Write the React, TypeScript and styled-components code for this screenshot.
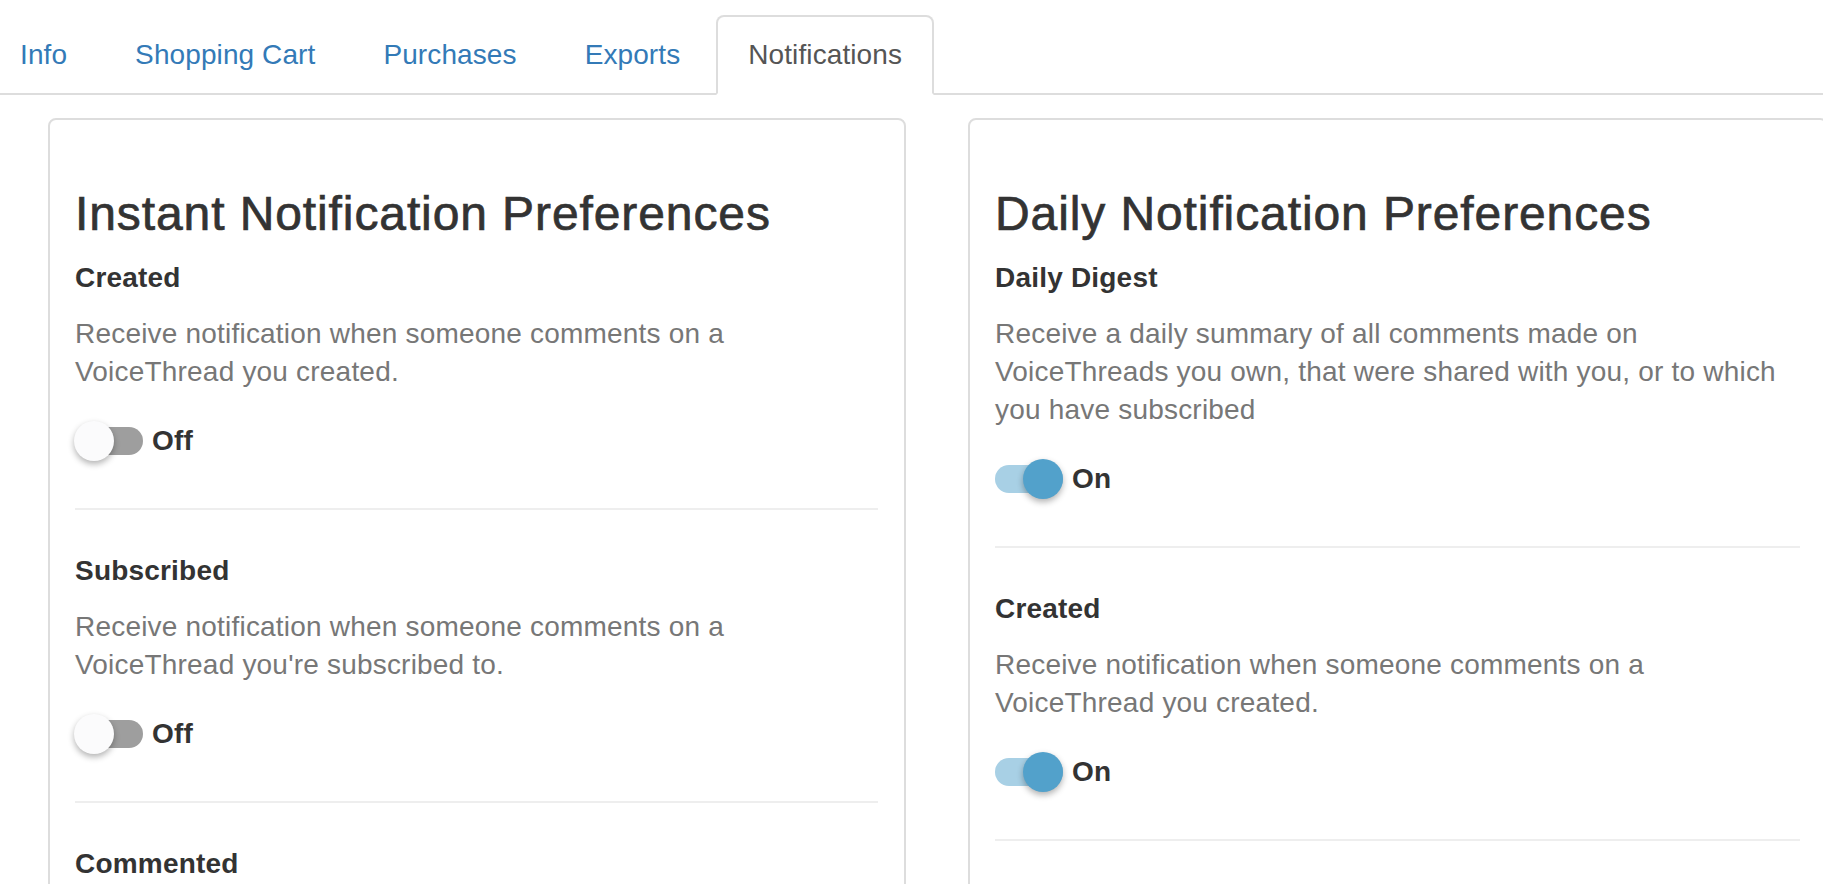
import * as React from 'react'
import styled, { createGlobalStyle } from 'styled-components'

type Pref = { title: string; text: string; on: boolean }

const instant: Pref[] = [
  {
    title: 'Created',
    text: 'Receive notification when someone comments on a VoiceThread you created.',
    on: false,
  },
  {
    title: 'Subscribed',
    text: "Receive notification when someone comments on a VoiceThread you're subscribed to.",
    on: false,
  },
  {
    title: 'Commented',
    text: "Receive notification when someone comments on a VoiceThread you've commented on.",
    on: false,
  },
]

const daily: Pref[] = [
  {
    title: 'Daily Digest',
    text: 'Receive a daily summary of all comments made on VoiceThreads you own, that were shared with you, or to which you have subscribed',
    on: true,
  },
  {
    title: 'Created',
    text: 'Receive notification when someone comments on a VoiceThread you created.',
    on: true,
  },
  {
    title: 'Subscribed',
    text: "Receive notification when someone comments on a VoiceThread you're subscribed to.",
    on: true,
  },
]

const tabs = ['Info', 'Shopping Cart', 'Purchases', 'Exports', 'Notifications']

const Toggle = ({ on }: { on: boolean }) => (
  <ToggleRow>
    <Track $on={on} role="switch" aria-checked={on}>
      <Thumb $on={on} />
    </Track>
    <ToggleLabel>{on ? 'On' : 'Off'}</ToggleLabel>
  </ToggleRow>
)

const Section = ({ pref, last }: { pref: Pref; last: boolean }) => (
  <>
    <Label>{pref.title}</Label>
    <Description>{pref.text}</Description>
    <Toggle on={pref.on} />
    {!last && <Divider />}
  </>
)

const Card = ({ title, prefs }: { title: string; prefs: Pref[] }) => (
  <Panel>
    <Heading>{title}</Heading>
    {prefs.map((p, i) => (
      <Section key={p.title + i} pref={p} last={i === prefs.length - 1} />
    ))}
  </Panel>
)

const App = () => (
  <Page>
    <GlobalStyle />
    <TabBar>
      <TabList>
        {tabs.map(t => (
          <Tab key={t} $active={t === 'Notifications'}>
            {t}
          </Tab>
        ))}
      </TabList>
    </TabBar>
    <Columns>
      <Card title="Instant Notification Preferences" prefs={instant} />
      <Card title="Daily Notification Preferences" prefs={daily} />
    </Columns>
  </Page>
)

export default App

const GlobalStyle = createGlobalStyle`
  html, body {
    margin: 0;
    padding: 0;
    background: #fff;
  }
  body {
    font-family: "Liberation Sans", Helvetica, Arial, sans-serif;
    font-size: 28px;
    line-height: 40px;
    letter-spacing: 0.2px;
    color: #333;
    overflow: hidden;
  }
  * {
    box-sizing: border-box;
  }
`

const Page = styled.div`
  width: 100%;
  height: 884px;
  overflow: hidden;
`

const TabBar = styled.nav`
  padding-top: 15px;
  border-bottom: 2px solid #ddd;
`

const TabList = styled.div`
  display: flex;
  margin-left: -12px;
`

const Tab = styled.a<{ $active: boolean }>`
  display: block;
  padding: 18px 30px;
  line-height: 40px;
  letter-spacing: 0.1px;
  margin-right: 4px;
  margin-bottom: -2px;
  border: 2px solid ${p => (p.$active ? '#ddd' : 'transparent')};
  border-bottom-color: transparent;
  border-radius: 8px 8px 0 0;
  background: ${p => (p.$active ? '#fff' : 'transparent')};
  color: ${p => (p.$active ? '#555' : '#337ab7')};
  cursor: pointer;
`

const Columns = styled.div`
  display: grid;
  grid-template-columns: 858px 860px;
  column-gap: 62px;
  padding: 23px 0 0 48px;
  align-items: start;
`

const Panel = styled.section`
  border: 2px solid #ddd;
  border-radius: 8px;
  padding: 25px 26px 40px 25px;
  background: #fff;
`

const Heading = styled.h3`
  margin: 43px 0 17px;
  font-size: 48px;
  line-height: 1.1;
  font-weight: 500;
  letter-spacing: 0.9px;
  -webkit-text-stroke: 0.7px #333;
  color: #333;
`

const Label = styled.div`
  font-weight: 700;
  line-height: 40px;
  margin-bottom: 17px;
  color: #333;
`

const Description = styled.p`
  margin: 0 0 30px;
  line-height: 38px;
  color: #777;
`

const ToggleRow = styled.div`
  display: flex;
  align-items: center;
  height: 40px;
  gap: 9px;
`

const Track = styled.span<{ $on: boolean }>`
  position: relative;
  display: inline-block;
  width: 68px;
  height: 28px;
  border-radius: 14px;
  background: ${p => (p.$on ? '#a8d0e5' : '#9e9e9e')};
  cursor: pointer;
`

const Thumb = styled.span<{ $on: boolean }>`
  position: absolute;
  top: -6px;
  left: ${p => (p.$on ? '28px' : '-1px')};
  width: 40px;
  height: 40px;
  border-radius: 50%;
  background: ${p => (p.$on ? '#52a1cb' : '#fbfbfc')};
  box-shadow: 0 3px 6px rgba(0, 0, 0, 0.3);
`

const ToggleLabel = styled.span`
  font-weight: 700;
  color: #333;
`

const Divider = styled.hr`
  margin: 47px 0 41px;
  border: 0;
  border-top: 2px solid #eee;
`
